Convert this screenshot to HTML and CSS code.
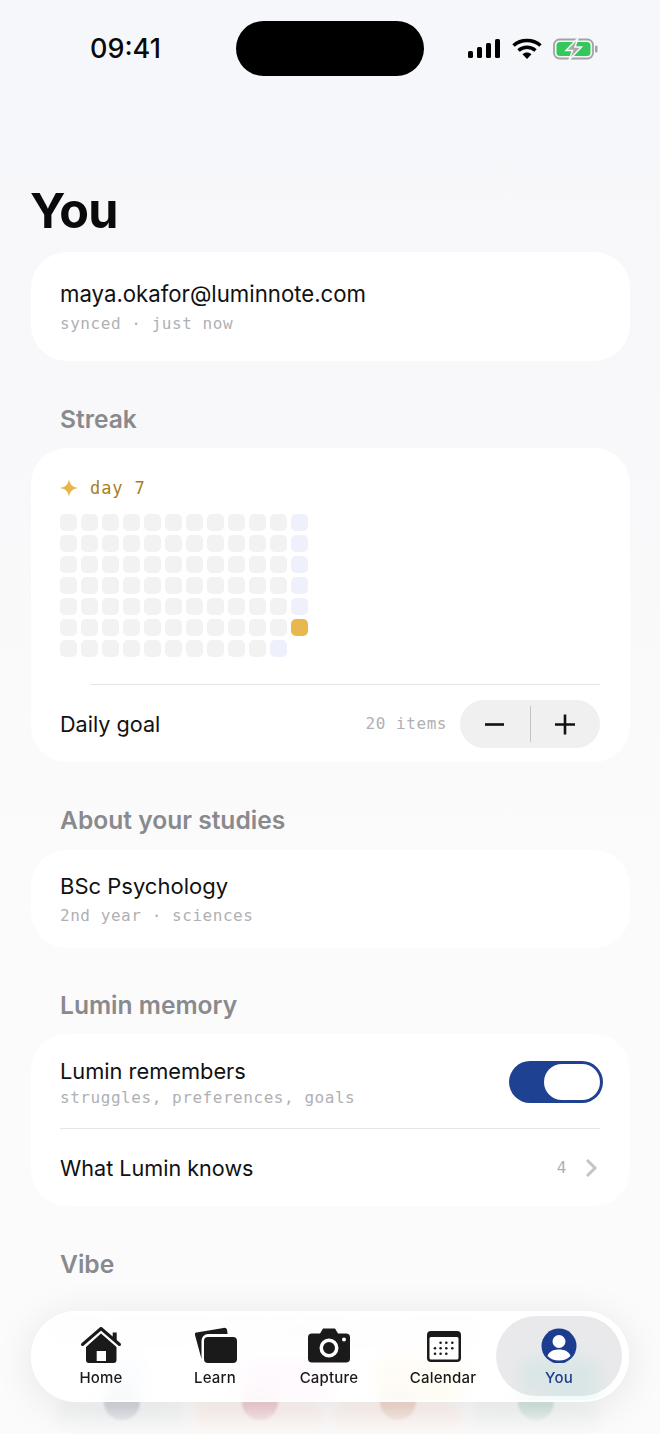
FILE: index.html
```html
<!DOCTYPE html>
<html lang="en">
<head>
<meta charset="UTF-8">
<title>You</title>
<link rel="stylesheet" href="styles.css">
</head>
<body>
<div class="screen">
  <!-- status bar -->
  <div class="status">
    <span class="time">09:41</span>
    <span class="island"></span>
    <div class="status-icons">
      <svg width="34" height="21" viewBox="0 0 34 21"><rect x="1" y="13" width="5" height="7" rx="1.5"/><rect x="10" y="9" width="5" height="11" rx="1.5"/><rect x="19" y="5" width="5" height="15" rx="1.5"/><rect x="28" y="1" width="5" height="19" rx="1.5"/></svg>
      <svg width="30" height="22" viewBox="0 0 30 22"><path d="M1.500 7.500C9 .8 21 .8 28.500 7.500" fill="none" stroke="#000" stroke-width="3.600"/><path d="M6.500 12.500C11.500 8.200 18.500 8.200 23.500 12.500" fill="none" stroke="#000" stroke-width="3.600"/><path d="M10.500 16.200C13.200 14 16.800 14 19.500 16.200L15 21Z"/></svg>
      <svg class="battery" width="46" height="22" viewBox="0 0 46 22"><rect x="1" y="1.500" width="39" height="19" rx="5.500" fill="none" stroke="#a3a3a3" stroke-width="1.800"/><rect x="3.500" y="4" width="34" height="14" rx="3.500" fill="#34c759"/><rect x="42" y="7.500" width="2.500" height="7" rx="1.200" fill="#a3a3a3"/><path d="M25 0 13 12.500h6.500L16 22l12.500-13H22Z" fill="#a9a9a9" stroke="#f7f8fa" stroke-width="1.500"/></svg>
    </div>
  </div>

  <h1 class="page-title">You</h1>

  <section class="card card-account">
    <div class="row-title email">maya.okafor@luminnote.com</div>
    <div class="mono sub">synced · just now</div>
  </section>

  <h2 class="section-label">Streak</h2>
  <section class="card card-streak">
    <div class="streak-day">
      <svg width="18" height="18" viewBox="0 0 18 18"><path d="M9 0C9.800 5.500 12.500 8.200 18 9 12.500 9.800 9.800 12.500 9 18 8.200 12.500 5.500 9.800 0 9 5.500 8.200 8.200 5.500 9 0Z" fill="#e8b54a"/></svg>
      <span class="mono">day 7</span>
    </div>
    <div class="heatmap">
      <i></i><i></i><i></i><i></i><i></i><i></i><i></i><i></i><i></i><i></i><i></i><i class="fresh"></i>
      <i></i><i></i><i></i><i></i><i></i><i></i><i></i><i></i><i></i><i></i><i></i><i class="fresh"></i>
      <i></i><i></i><i></i><i></i><i></i><i></i><i></i><i></i><i></i><i></i><i></i><i class="fresh"></i>
      <i></i><i></i><i></i><i></i><i></i><i></i><i></i><i></i><i></i><i></i><i></i><i class="fresh"></i>
      <i></i><i></i><i></i><i></i><i></i><i></i><i></i><i></i><i></i><i></i><i></i><i class="fresh"></i>
      <i></i><i></i><i></i><i></i><i></i><i></i><i></i><i></i><i></i><i></i><i></i><i class="today"></i>
      <i></i><i></i><i></i><i></i><i></i><i></i><i></i><i></i><i></i><i></i><i class="fresh"></i>
    </div>
    <div class="goal-row">
      <span class="row-title">Daily goal</span>
      <span class="mono sub goal-count">20 items</span>
      <div class="stepper">
        <svg width="70" height="48" viewBox="0 0 70 48"><path d="M25 24.500H44" stroke="#111" stroke-width="2.600"/></svg>
        <span class="stepper-line"></span>
        <svg width="69" height="48" viewBox="0 0 69 48"><path d="M24 24.500H44M34 14.500V34.500" stroke="#111" stroke-width="2.600"/></svg>
      </div>
    </div>
  </section>

  <h2 class="section-label">About your studies</h2>
  <section class="card card-studies">
    <div class="row-title degree">BSc Psychology</div>
    <div class="mono sub">2nd year · sciences</div>
  </section>

  <h2 class="section-label">Lumin memory</h2>
  <section class="card card-memory">
    <div class="memory-top">
      <div class="memory-text">
        <div class="row-title remembers">Lumin remembers</div>
        <div class="mono sub">struggles, preferences, goals</div>
      </div>
      <span class="toggle"><span class="knob"></span></span>
    </div>
    <div class="memory-bottom">
      <span class="row-title">What Lumin knows</span>
      <span class="mono sub knows-count">4</span>
      <svg width="13" height="20" viewBox="0 0 13 20"><path d="M2 2 10 10 2 18" fill="none" stroke="#c4c4c6" stroke-width="3"/></svg>
    </div>
  </section>

  <h2 class="section-label">Vibe</h2>
  <section class="vibe">
    <p class="vibe-text">How should Lumin talk to your study</p>
    <div class="vibe-row">
      <div class="vibe-item"><span class="blob blob-blue"></span><span class="tile"></span><span class="dot dot-slate"></span></div>
      <div class="vibe-item"><span class="blob blob-pink"></span><span class="tile tile-peach"></span><span class="dot dot-red"></span></div>
      <div class="vibe-item"><span class="blob blob-yellow"></span><span class="tile tile-peach"></span><span class="dot dot-orange"></span></div>
      <div class="vibe-item"><span class="blob blob-teal"></span><span class="tile"></span><span class="dot dot-green"></span></div>
    </div>
  </section>

  <div class="fade"></div>

  <!-- tab bar -->
  <nav class="tabbar">
    <a class="tab">
      <svg width="42" height="38" viewBox="0 0 42 38"><path d="M21 3.500 2.500 19.500M21 3.500l18.500 16" fill="none" stroke="#1a1a1a" stroke-width="3" stroke-linecap="round"/><path d="M32.700 7.500h4v9l-4-3.500Z" fill="#1a1a1a"/><path fill-rule="evenodd" d="M21 8.500 36.500 22v13a3 3 0 0 1-3 3H9a3 3 0 0 1-3-3V22ZM16.700 26v10h9.300V26Z" fill="#1a1a1a"/></svg>
      <span>Home</span>
    </a>
    <a class="tab">
      <svg width="44" height="38" viewBox="0 0 44 38"><path d="M3.500 7.600 30.500 2.900c1.800-.3 3.200.6 3.600 2.200l.5 3.900H15a6.500 6.500 0 0 0-6.500 6.500v18.500L2 10c-.4-1.300.2-2.200 1.500-2.400Z" fill="#1a1a1a"/><rect x="11" y="12" width="33" height="26" rx="4" fill="#1a1a1a"/></svg>
      <span>Learn</span>
    </a>
    <a class="tab">
      <svg width="44" height="38" viewBox="0 -1.500 44 38"><path fill-rule="evenodd" d="M5 7h8l3-5h12l3 5h8a4 4 0 0 1 4 4v21a4 4 0 0 1-4 4H5a4 4 0 0 1-4-4V11a4 4 0 0 1 4-4ZM22 12a9.500 9.500 0 1 0 0 19 9.500 9.500 0 0 0 0-19Zm0 3.500a6 6 0 1 1 0 12 6 6 0 0 1 0-12ZM37 11a2 2 0 1 0 0 4 2 2 0 0 0 0-4Z" fill="#1a1a1a"/></svg>
      <span>Capture</span>
    </a>
    <a class="tab">
      <svg width="36" height="38" viewBox="-1 -2 36 38"><rect x="1" y="4" width="34" height="31" rx="4" fill="#1a1a1a"/><rect x="3.500" y="10" width="29" height="22.500" rx="1.500" fill="#fff"/><g fill="#1a1a1a"><circle cx="14.600" cy="15.700" r="1.300"/><circle cx="20.300" cy="15.700" r="1.300"/><circle cx="26.300" cy="15.700" r="1.300"/><circle cx="9" cy="21.300" r="1.300"/><circle cx="14.600" cy="21.300" r="1.300"/><circle cx="20.300" cy="21.300" r="1.300"/><circle cx="26.300" cy="21.300" r="1.300"/><circle cx="9" cy="26.700" r="1.300"/><circle cx="14.600" cy="26.700" r="1.300"/><circle cx="20.300" cy="26.700" r="1.300"/></g></svg>
      <span>Calendar</span>
    </a>
    <a class="tab tab-active">
      <svg width="36" height="38" viewBox="0 -2 36 38"><circle cx="18" cy="19" r="17.500" fill="#1c3d8f"/><circle cx="18" cy="14.500" r="6.500" fill="#fff"/><path d="M6.500 29c1.500-4.500 6-6.500 11.500-6.500S28 24.500 29.500 29c-3 3-7 4.500-11.500 4.500S9.500 32 6.500 29Z" fill="#fff"/></svg>
      <span>You</span>
    </a>
  </nav>
</div>
</body>
</html>
```

FILE: styles.css
```css
* {
    box-sizing: border-box;
}
html, body {
    margin: 0;
    padding: 0;
}
body {
    font-family: 'Inter', 'Liberation Sans', sans-serif;
    color: #111;
}
.screen {
    position: relative;
    width: 660px;
    height: 1434px;
    overflow: hidden;
    padding: 0 30px 0 31px;
    background: linear-gradient(#f6f7fa, #f8f8fa 400px, #fbfbfb 900px);
}

/* status bar */
.status {
    height: 98px;
    margin: 0 -31px;
    padding: 21px 0 0 90px;
    display: flex;
    align-items: flex-start;
}
.time {
    flex: none;
    width: 146px;
    font-size: 27px;
    font-weight: 500;
    line-height: 55px;
    color: #0a0a0a;
}
.island {
    flex: none;
    width: 188px;
    height: 55px;
    border-radius: 28px;
    background: #000;
}
.status-icons {
    margin-left: 43px;
    height: 55px;
    display: flex;
    align-items: center;
    gap: 11px;
}

.page-title {
    margin: 85px 0 13px -1px;
    font-size: 48.5px;
    font-weight: 700;
    line-height: 56px;
    letter-spacing: -.8px;
    color: #0a0a0a;
}
.card {
    background: #fff;
    border-radius: 36px;
    padding: 0 30px 0 29px;
}
.section-label {
    margin: 0;
    padding-left: 29px;
    font-size: 24.6px;
    font-weight: 600;
    line-height: 32px;
    color: #8a8a8e;
}
.row-title {
    font-size: 21.6px;
    line-height: 28px;
    color: #111;
}
.email {
    font-size: 22.2px;
}
.degree {
    font-size: 22px;
}
.remembers {
    font-size: 21.8px;
}
.mono {
    font-family: 'DejaVu Sans Mono', 'Liberation Mono', monospace;
}
.sub {
    font-size: 16px;
    line-height: 20px;
    letter-spacing: .55px;
    color: #b0b0b3;
}

.card-account {
    height: 109px;
    padding-top: 28px;
    margin-bottom: 42px;
}
.card-account .sub {
    margin-top: 6px;
}

/* streak */
.card-streak {
    height: 314px;
    margin-top: 13px;
    margin-bottom: 42px;
    padding-top: 30px;
}
.streak-day {
    display: flex;
    align-items: center;
    gap: 12px;
    height: 20px;
    font-size: 17px;
    letter-spacing: .9px;
    color: #a97f1e;
}
.heatmap {
    margin-top: 16px;
    display: grid;
    grid-template-columns: repeat(12, 17px);
    grid-auto-rows: 17px;
    gap: 4px;
}
.heatmap i {
    border-radius: 5px;
    background: #f2f2f3;
}
.heatmap .fresh {
    background: #eef1fb;
}
.heatmap .today {
    background: #e8b84e;
}
.goal-row {
    margin-top: 27px;
    margin-left: 30px;
    height: 78px;
    border-top: 1px solid #e6e6e8;
    display: flex;
    align-items: center;
}
.goal-row .row-title {
    margin-left: -30px;
}
.goal-count {
    margin-left: auto;
    margin-right: 13px;
}
.stepper {
    width: 140px;
    height: 48px;
    border-radius: 24px;
    background: #f0f0f0;
    display: flex;
    align-items: center;
}
.stepper-line {
    width: 1px;
    height: 36px;
    background: #c4c4c4;
    flex: none;
}

/* studies */
.card-studies {
    height: 98px;
    margin-top: 14px;
    margin-bottom: 41px;
    padding-top: 22px;
}
.card-studies .sub {
    margin-top: 6px;
}

/* memory */
.card-memory {
    height: 172px;
    margin-top: 13px;
    margin-bottom: 42px;
}
.memory-top {
    height: 95px;
    border-bottom: 1px solid #e6e6e8;
    display: flex;
    justify-content: space-between;
    align-items: center;
}
.memory-text {
    padding-top: 3px;
}
.memory-top .sub {
    margin-top: 3px;
}
.toggle {
    width: 94px;
    height: 42px;
    margin: 2px -3px 0 0;
    padding: 3px;
    border-radius: 21px;
    background: #1f4191;
    display: flex;
    justify-content: flex-end;
}
.knob {
    width: 56px;
    height: 36px;
    border-radius: 18px;
    background: #fff;
}
.memory-bottom {
    height: 77px;
    padding-right: 2px;
    display: flex;
    align-items: center;
}
.knows-count {
    margin-left: auto;
    margin-right: 18px;
}

/* vibe, mostly under the tab bar */
.vibe-text {
    margin: 36px 0 0 24px;
    font-size: 24px;
    line-height: 27px;
    font-weight: 600;
    color: #e2e4ec;
    white-space: nowrap;
}
.vibe-row {
    margin: 0 0 0 29px;
    display: flex;
}
.vibe-item {
    position: relative;
    flex: none;
    width: 138px;
    height: 90px;
}
.blob {
    position: absolute;
    top: 15px;
    left: 42px;
    width: 88px;
    height: 44px;
    border-radius: 14px;
}
.blob-blue { background: #e3ecfa; width: 36px; left: 46px; }
.blob-pink { background: #fbdcf7; }
.blob-yellow { background: #feecba; left: 40px; }
.blob-teal { background: #8fe8da; left: 46px; width: 80px; }
.tile {
    position: absolute;
    top: 60px;
    left: -4px;
    width: 130px;
    height: 50px;
    border-radius: 14px;
    background: #f3f4f5;
    filter: blur(5px);
}
.tile-peach {
    background: #fcf1ec;
}
.dot {
    position: absolute;
    top: 41px;
    left: 44px;
    width: 36px;
    height: 36px;
    border-radius: 50%;
    filter: blur(1px);
}
.dot-slate { background: #d2d6db; }
.dot-red { background: #efcfd2; }
.dot-orange { background: #f0d8cd; }
.dot-green { background: #d3e5df; }

.fade {
    position: absolute;
    left: 0;
    right: 0;
    bottom: 0;
    height: 28px;
    background: linear-gradient(rgba(251,251,251,0), rgba(251,251,251,.95));
}

/* tab bar */
.tabbar {
    position: absolute;
    left: 31px;
    top: 1311px;
    width: 598px;
    height: 91px;
    padding: 5px 0 6px 13px;
    border-radius: 46px;
    background: rgba(255, 255, 255, .84);
    backdrop-filter: blur(8px);
    box-shadow: 0 6px 40px rgba(0, 0, 0, .09), inset 0 0 0 2px rgba(255, 255, 255, .75);
    display: flex;
}
.tab {
    width: 114px;
    display: flex;
    flex-direction: column;
    align-items: center;
    justify-content: flex-end;
    font-size: 15px;
    font-weight: 500;
    line-height: 20px;
    letter-spacing: .2px;
    padding-bottom: 8px;
    color: #1a1a1a;
}
.tab svg {
    margin-bottom: 5px;
}
.tab-active {
    width: 126px;
    margin-left: -4px;
    border-radius: 40px;
    background: rgba(120, 120, 130, .16);
    color: #1c3d8f;
}
```
